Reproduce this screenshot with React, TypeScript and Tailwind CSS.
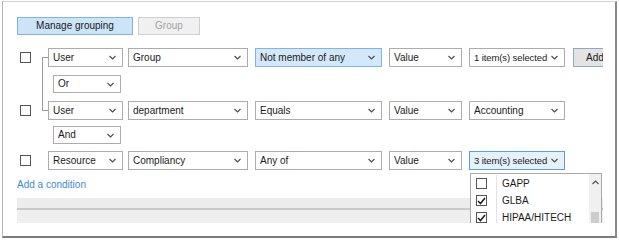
import type { ReactNode } from "react";

type SelectProps = {
  label: string;
  width: string;
  active?: boolean;
  small?: boolean;
  className?: string;
};

function Chevron({ up = false }: { up?: boolean }) {
  return (
    <svg width="7" height="5" viewBox="0 0 7 5" className="shrink-0">
      <path
        d={up ? "M0.5 4 L3.5 1 L6.5 4" : "M0.5 1 L3.5 4 L6.5 1"}
        fill="none"
        stroke="#4a4a4a"
        strokeWidth="1.1"
      />
    </svg>
  );
}

function Select({ label, width, active, small, className = "" }: SelectProps) {
  return (
    <div
      className={`flex h-[19px] shrink-0 items-center justify-between border pl-[4px] pr-[6px] ${width} ${
        active ? "border-[#7eb4ea] bg-[#d3e8fa]" : "border-[#acacac] bg-white"
      } ${className}`}
    >
      <span className={`whitespace-nowrap leading-none ${small ? "text-[9.5px] tracking-[-0.1px]" : ""}`}>
        {label}
      </span>
      <Chevron />
    </div>
  );
}

function Check({ checked = false, className = "" }: { checked?: boolean; className?: string }) {
  return (
    <div
      className={`flex size-[11px] shrink-0 items-center justify-center border border-[#555] bg-white ${className}`}
    >
      {checked && (
        <svg width="9" height="8" viewBox="0 0 9 8">
          <path d="M1 4 L3.5 6.5 L8 1" fill="none" stroke="#222" strokeWidth="1.6" />
        </svg>
      )}
    </div>
  );
}

function Row({ children }: { children: ReactNode }) {
  return <div className="flex h-[19px] items-center overflow-hidden">{children}</div>;
}

const options = [
  { label: "GAPP", checked: false },
  { label: "GLBA", checked: true },
  { label: "HIPAA/HITECH", checked: true },
];

export default function App() {
  return (
    <div className="h-[240px] w-[619px] bg-white pl-[2px] pt-[1px] font-['Liberation_Sans',Arial,sans-serif] text-[10px] text-[#1b1b1b]">
      <div className="h-[237px] w-[615px] border-l border-t border-b-2 border-r-2 border-l-[#b4b4b4] border-t-[#d4d4d4] border-b-[#7c7c7c] border-r-[#8a8a8a] bg-white pl-[14px] pt-[15px]">
        <div className="flex gap-[5px]">
          <button className="h-[18px] w-[116px] border border-[#7eb4ea] bg-[#cce4f7] leading-none text-[#1b1b1b]">
            Manage grouping
          </button>
          <button className="h-[18px] w-[62px] border border-[#cfcfcf] bg-[#f0f0f0] leading-none text-[#a3a3a3]">
            Group
          </button>
        </div>

        <div className="relative mt-[13px] h-[175px] w-[586px] overflow-hidden">
          {/* tree connector between grouped rows */}
          <div className="absolute left-[25px] top-[9px] h-[54px] w-[6px] border-l border-t border-b border-[#9a9a9a]" />

          <Row>
            <Check className="ml-[3px]" />
            <Select label="User" width="w-[75px]" className="ml-[17px]" />
            <Select label="Group" width="w-[120px]" className="ml-[5px]" />
            <Select label="Not member of any" width="w-[127px]" active className="ml-[7px]" />
            <Select label="Value" width="w-[73px]" className="ml-[7px]" />
            <Select label="1 item(s) selected" width="w-[96px]" small className="ml-[7px]" />
            <button className="ml-[8px] h-[19px] w-[44px] shrink-0 border border-[#8ea8c6] bg-[#e3e3e3] leading-none">
              Add
            </button>
          </Row>

          <div className="mt-[8px] flex h-[18px]">
            <Select label="Or" width="w-[68px] !h-[18px]" className="ml-[36px]" />
          </div>

          <div className="mt-[8px]">
            <Row>
              <Check className="ml-[3px]" />
              <Select label="User" width="w-[75px]" className="ml-[17px]" />
              <Select label="department" width="w-[120px]" className="ml-[5px]" />
              <Select label="Equals" width="w-[127px]" className="ml-[7px]" />
              <Select label="Value" width="w-[73px]" className="ml-[7px]" />
              <Select label="Accounting" width="w-[96px]" className="ml-[7px]" />
            </Row>
          </div>

          <div className="mt-[6px] flex h-[18px]">
            <Select label="And" width="w-[68px] !h-[18px]" className="ml-[36px]" />
          </div>

          <div className="relative mt-[7px]">
            <Row>
              <Check className="ml-[3px]" />
              <Select label="Resource" width="w-[75px]" className="ml-[17px]" />
              <Select label="Compliancy" width="w-[120px]" className="ml-[5px]" />
              <Select label="Any of" width="w-[127px]" className="ml-[7px]" />
              <Select label="Value" width="w-[73px]" className="ml-[7px]" />
              <div className="ml-[7px] flex h-[19px] w-[96px] shrink-0 items-center justify-between border border-[#5a9fdc] bg-[#e5f1fb] pl-[4px] pr-[6px]">
                <span className="whitespace-nowrap text-[9.5px] leading-none tracking-[-0.1px]">
                  3 item(s) selected
                </span>
                <Chevron />
              </div>
            </Row>
          </div>

          <div className="mt-[8px] flex h-[14px] items-center leading-none text-[#3c8ad8]">
            Add a condition
          </div>

          <div className="mt-[6px] flex flex-col">
            <div className="h-[10px] bg-[#ececec]" />
            <div className="h-[2px] bg-[#c9c9c9]" />
            <div className="h-[13px] bg-[#efefef]" />
          </div>

          {/* open multi-select list */}
          <div className="absolute left-[453px] top-[125px] flex h-[60px] w-[132px] border border-[#a8a8a8] bg-white">
            <div className="flex flex-1 flex-col pt-[1px]">
              {options.map((o) => (
                <div key={o.label} className="flex h-[17px] items-center">
                  <div className="flex h-full w-[26px] items-center border-r border-[#e2e2e2] pl-[5px]">
                    <Check checked={o.checked} />
                  </div>
                  <span className="whitespace-nowrap pl-[5px] leading-none">{o.label}</span>
                </div>
              ))}
            </div>
            <div className="flex w-[12px] flex-col items-center bg-[#f0f0f0] pt-[6px]">
              <Chevron up />
              <div className="mt-[27px] h-[20px] w-[8px] bg-[#cdcdcd]" />
            </div>
          </div>
        </div>
      </div>
    </div>
  );
}
